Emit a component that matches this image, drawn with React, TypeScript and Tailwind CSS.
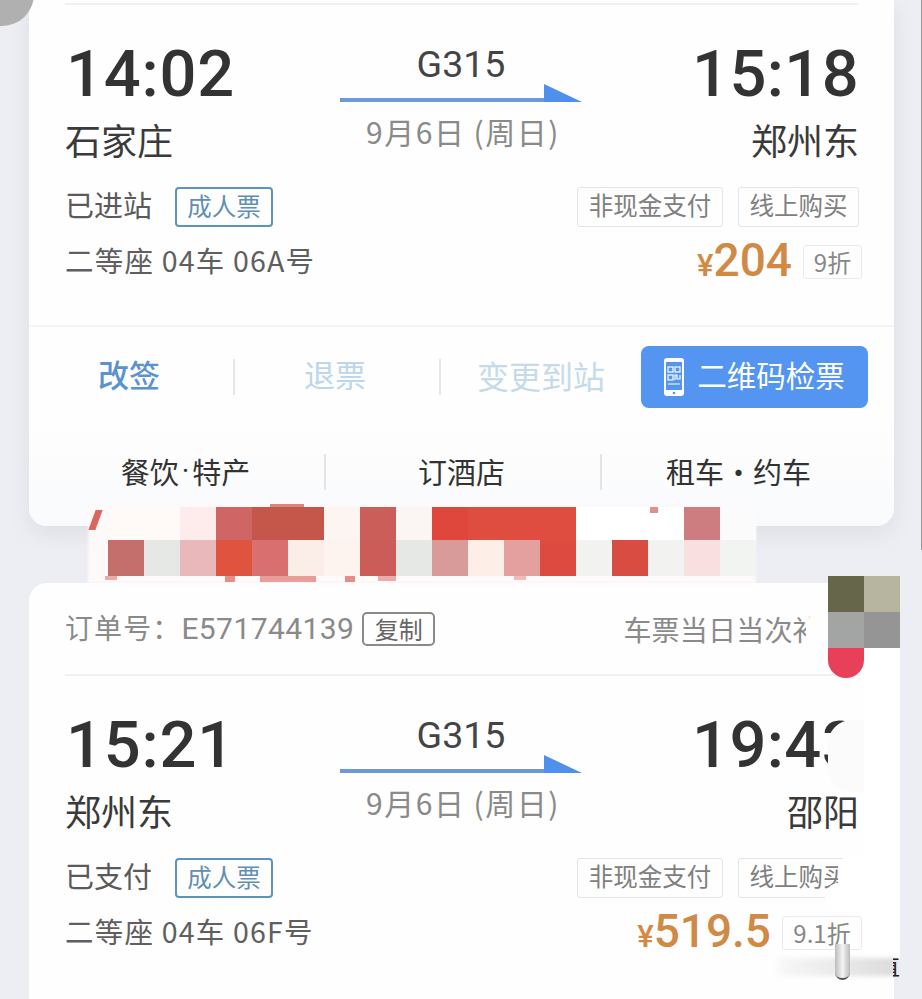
const fontCn = "font-['Noto_Sans_CJK_SC','Noto_Sans',sans-serif]";
const fontNum = "font-['Roboto','Noto_Sans_CJK_SC',sans-serif]";

const topCells = [
  "bg-[#fffaf8]", "bg-[#fffaf8]", "bg-[#fdeceb]", "bg-[#cf6665]", "bg-[#c5574a]", "bg-[#c5574a]", "bg-[#fdf5f2]", "bg-[#cc5e5a]",
  "bg-[#fbf6f4]", "bg-[#e0473c]", "bg-[#de4d3f]", "bg-[#de4d3f]", "bg-[#de4d3f]", "bg-white", "bg-white", "bg-white", "bg-[#cd7c80]", "bg-[#fbfbfb]",
];
const bottomCells = [
  "bg-[#c46f6c]", "bg-[#e6e8e6]", "bg-[#e8b8ba]", "bg-[#e0533f]", "bg-[#d9706f]", "bg-[#fbeee9]", "bg-[#fdf3ef]", "bg-[#cb5c58]",
  "bg-[#e6e8e6]", "bg-[#d99a9a]", "bg-[#fdeee8]", "bg-[#e4a09e]", "bg-[#dd4a3f]", "bg-[#f2f2f0]", "bg-[#d84c42]", "bg-[#f2f2f0]", "bg-[#fadfe0]", "bg-[#f2f4f2]",
];
const avatarCells = ["bg-[#65664a]", "bg-[#b7b49f]", "bg-[#a3a5a4]", "bg-[#959595]", "bg-[#e8405a]", "bg-white"];

function PhoneQr() {
  return (
    <svg width="20" height="38" viewBox="0 0 20 38" className="shrink-0">
      <rect x="0" y="0" width="20" height="38" rx="3" fill="#fff" />
      <rect x="2" y="4" width="16" height="28" fill="#5395f0" />
      <circle cx="10" cy="35" r="1.3" fill="#5395f0" />
      <g fill="none" stroke="#fff" strokeWidth="1.2">
        <rect x="4" y="9" width="5" height="5" />
        <rect x="11" y="9" width="5" height="5" />
        <rect x="4" y="17" width="5" height="5" />
        <path d="M11 22v-5h2v4h3v-4M4 26h12" />
      </g>
    </svg>
  );
}

function Chip({ children, className = "" }: { children: React.ReactNode; className?: string }) {
  return (
    <span className={`flex h-10 items-center justify-center rounded-[3px] border border-[#e4e4e4] pb-[2px] text-[24.5px] text-[#808080] ${className}`}>
      {children}
    </span>
  );
}

type TicketProps = {
  depart: string;
  arrive: string;
  from: string;
  to: string;
  status: string;
  seat: string;
  price: string;
  discount: string;
  discountWidth: string;
};

function Ticket({ depart, arrive, from, to, status, seat, price, discount, discountWidth }: TicketProps) {
  return (
    <div className="pl-[36px] pr-[35px]">
      <div className="grid h-[168px] grid-cols-[275px_242px_1fr] border-t-2 border-[#f1f1f3]">
        <div>
          <div className={`mt-[27px] h-[84px] pl-[1px] text-[65px] leading-[84px] font-medium tracking-[0.8px] text-[#333] ${fontNum}`}>{depart}</div>
          <div className={`-mt-[3px] text-[36px] leading-[52px] text-[#3a3a3a] ${fontCn}`}>{from}</div>
        </div>
        <div className="flex flex-col items-center">
          <div className={`mt-[35px] h-[44px] text-[37.5px] leading-[48px] text-[#444] ${fontNum}`}>G315</div>
          <svg width="242" height="24" viewBox="0 0 242 24" className="block">
            <rect x="0" y="14" width="208" height="4" fill="#6a9bd8" />
            <path d="M204 0L242 18H204Z" fill="#4f90ea" />
          </svg>
          <div className={`mt-[1px] pl-[4px] text-[30px] leading-[44px] tracking-[1.5px] text-[#8a8a8a] ${fontCn}`}>9月6日 (周日)</div>
        </div>
        <div className="flex flex-col items-end">
          <div className={`mt-[27px] h-[84px] text-[65px] leading-[84px] font-medium tracking-[0.4px] text-[#333] ${fontNum}`}>{arrive}</div>
          <div className={`-mt-[3px] text-[36px] leading-[52px] text-[#3a3a3a] ${fontCn}`}>{to}</div>
        </div>
      </div>
      <div className="mt-[15px] flex h-[41px] items-center justify-between">
        <div className="flex items-center gap-[23px]">
          <span className={`pb-[5px] text-[29px] leading-[40px] text-[#5a5a5a] ${fontCn}`}>{status}</span>
          <span className={`flex h-10 w-[98px] items-center justify-center rounded-[4px] border-2 border-[#5f93b8] text-[24.5px] text-[#5f8fb3] ${fontCn}`}>成人票</span>
        </div>
        <div className={`flex gap-[15px] ${fontCn}`}>
          <Chip className="w-[146px]">非现金支付</Chip>
          <Chip className="w-[121px]">线上购买</Chip>
        </div>
      </div>
      <div className="mt-[11px] flex h-[44px] items-center justify-between">
        <span className={`text-[28.5px] leading-[40px] tracking-[1.2px] text-[#5f5f5f] ${fontCn}`}>{seat}</span>
        <div className="-mr-[3px] flex items-center gap-[11px] pt-[8px]">
          <span className={`flex items-baseline font-medium text-[#d08a45] ${fontNum}`}>
            <span className="text-[31px]">¥</span>
            <span className="text-[46px] leading-[44px]">{price}</span>
          </span>
          <span className={`mb-[4px] flex h-[34px] items-center justify-center rounded-[3px] border border-[#eaeaea] text-[24px] text-[#888] ${discountWidth} ${fontCn}`}>{discount}</span>
        </div>
      </div>
    </div>
  );
}

export default function App() {
  return (
    <div className="relative h-[999px] w-[922px] overflow-hidden bg-[#eceef3]">
      <div className="ml-[29px] flex w-[865px] flex-col">
        {/* first order */}
        <div className="h-[526px] overflow-hidden rounded-b-[18px] bg-[#fefefe] shadow-[0_8px_20px_rgba(120,125,140,0.12)]">
          <div className="h-[3px]" />
          <Ticket
            depart="14:02"
            arrive="15:18"
            from="石家庄"
            to="郑州东"
            status="已进站"
            seat="二等座 04车 06A号"
            price="204"
            discount="9折"
            discountWidth="w-[59px]"
          />
          <div className="mt-[43px] border-t-2 border-[#f5f5f6] pt-[18px]">
            <div className={`flex h-[64px] items-center pl-[69px] ${fontCn}`}>
              <span className="pb-[5px] text-[31px] font-medium text-[#5b93cf]">改签</span>
              <span className="ml-[73px] h-[36px] w-[2px] bg-[#e6e6e6]" />
              <span className="ml-[69px] pb-[5px] text-[31px] text-[#bcd7ec]">退票</span>
              <span className="ml-[73px] h-[36px] w-[2px] bg-[#e6e6e6]" />
              <span className="ml-[36px] pb-[5px] text-[32px] text-[#c5dbea]">变更到站</span>
              <div className="ml-[36px] flex h-[62px] w-[227px] items-center justify-center gap-[13px] rounded-[8px] bg-[#5395f0] text-white">
                <PhoneQr />
                <span className="pb-[5px] text-[29.5px]">二维码检票</span>
              </div>
            </div>
            <div className={`mt-[15px] grid h-[110px] grid-cols-[276px_276px_276px] bg-gradient-to-b from-[#fefefe] to-[#f9fafc] pl-[21px] pt-[30px] text-[29px] text-[#333] ${fontCn}`}>
              <div className="flex h-[36px] items-center justify-center border-r-2 border-[#e4e4e6] pr-[3px]">
                餐饮<span className={`px-[3px] ${fontNum}`}>·</span>特产
              </div>
              <div className="flex h-[36px] items-center justify-center border-r-2 border-[#e4e4e6] pr-[3px]">订酒店</div>
              <div className="flex h-[36px] items-center justify-center pr-[3px]">租车·约车</div>
            </div>
          </div>
        </div>

        {/* second order */}
        <div className="mt-[57px] h-[420px] rounded-t-[18px] bg-[#fefefe]">
          <div className={`flex h-[91px] items-center justify-between pl-[36px] pr-[45px] text-[#8a8a8a] ${fontCn}`}>
            <div className="flex items-center gap-[8px]">
              <span className="text-[28px] tracking-[1.1px]">
                订单号：<span className={`text-[30px] tracking-[0.4px] ${fontNum}`}>E571744139</span>
              </span>
              <span className="flex h-[34px] w-[73px] items-center justify-center rounded-[5px] border-2 border-[#8a8a8a] text-[24px] text-[#666]">复制</span>
            </div>
            <span className="text-[28px] tracking-[0.2px] whitespace-nowrap">车票当日当次补签</span>
          </div>
          <Ticket
            depart="15:21"
            arrive="19:43"
            from="郑州东"
            to="邵阳"
            status="已支付"
            seat="二等座 04车 06F号"
            price="519.5"
            discount="9.1折"
            discountWidth="w-[80px]"
          />
        </div>
      </div>

      {/* corner of the blurred thing above the first card */}
      <div className="absolute -left-[30px] -top-[38px] h-[64px] w-[64px] rounded-full bg-[#b0b0b0]" />
      <div className="absolute right-0 top-0 h-[550px] w-[1px] bg-[#999]" />

      {/* mosaic over the headline between the cards */}
      <div className="absolute left-[88px] top-[506px] h-[78px] w-[668px] bg-[#fffafa]/90 [filter:blur(1.5px)]" />
      <div className="absolute left-[108px] top-[507px] grid grid-cols-[repeat(18,36px)] grid-rows-[33px_36px]">
        {topCells.map((c, i) => (
          <div key={i} className={c} />
        ))}
        {bottomCells.map((c, i) => (
          <div key={i} className={c} />
        ))}
      </div>
      <div className="absolute left-[92px] top-[510px] h-[20px] w-[7px] -skew-x-[20deg] bg-[#d9665f]" />
      <div className="absolute left-[105px] top-[576px] h-[4px] w-[12px] bg-[#d8605a]/50" />
      <div className="absolute left-[225px] top-[576px] h-[6px] w-[10px] bg-[#d8605a]/70" />
      <div className="absolute left-[260px] top-[576px] h-[6px] w-[56px] bg-[#d8605a]/60" />
      <div className="absolute left-[345px] top-[576px] h-[6px] w-[10px] bg-[#d8605a]/70" />
      <div className="absolute left-[378px] top-[576px] h-[5px] w-[18px] bg-[#d8605a]/50" />
      <div className="absolute left-[514px] top-[576px] h-[4px] w-[12px] bg-[#d8605a]/40" />
      <div className="absolute left-[270px] top-[504px] h-[3px] w-[34px] bg-[#c5574a]/70" />
      <div className="absolute left-[650px] top-[507px] h-[6px] w-[8px] bg-[#d8605a]/70" />

      {/* mosaic over the avatar at the right */}
      <div className="absolute left-[828px] top-[576px] grid grid-cols-[36px_36px] grid-rows-[36px_36px_30px] overflow-hidden">
        {avatarCells.map((c, i) => (
          <div key={i} className={i === 4 ? `${c} rounded-b-[30px]` : c} />
        ))}
      </div>
      <div className="absolute left-[806px] top-[610px] h-[44px] w-[22px] rounded-l-[18px] bg-[#fefefe]" />

      {/* wiped patches at the right of the second card */}
      <div className="absolute left-[864px] top-[648px] h-[310px] w-[36px] bg-white" />
      <div className="absolute left-[828px] top-[720px] h-[72px] w-[36px] rounded-l-[24px] bg-[#fbfbfb]" />
      <div className="absolute left-[838px] top-[856px] h-[44px] w-[26px] rounded-l-[12px] bg-white" />
      <div className="absolute left-[825px] top-[883px] h-[28px] w-[39px] rounded-l-[14px] bg-white" />
      <div className="absolute left-[778px] top-[958px] h-[18px] w-[118px] bg-gradient-to-r from-[#f8f8f8] to-[#dcdcdc] [filter:blur(2px)]" />
      <div className="absolute left-[835px] top-[944px] h-[36px] w-[15px] rounded-b-[8px] border-b-2 border-[#555] bg-gradient-to-r from-[#bbb] via-[#f4f4f4] to-[#bbb]" />
      <div className={`absolute left-[893px] top-[951px] h-[28px] w-[7px] overflow-hidden text-[22px] leading-[28px] text-[#222] ${fontCn}`}>
        <span className="-ml-[15px] block">直</span>
      </div>
    </div>
  );
}
